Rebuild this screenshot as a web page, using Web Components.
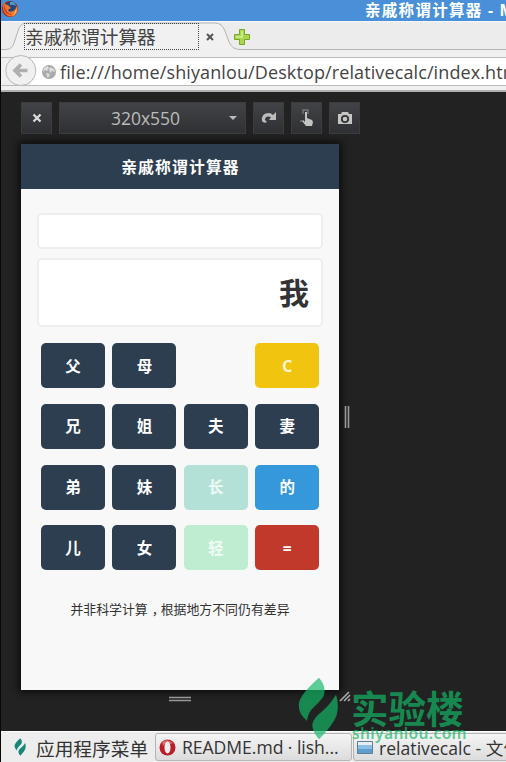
<!DOCTYPE html>
<html lang="zh-CN"><head><meta charset="utf-8"><title>亲戚称谓计算器</title>
<style>
html,body{margin:0;width:506px;height:762px;overflow:hidden;background:#222}
body{font-family:"Open Sans","Noto Sans CJK SC",sans-serif}
</style></head><body>
<desktop-screen></desktop-screen>
<script>
const define=(name,css,html)=>customElements.define(name,class extends HTMLElement{
  constructor(){super();this.attachShadow({mode:'open'}).innerHTML=`<style>*{box-sizing:border-box}svg{display:block;flex:none}${css}</style>${html}`;}
});

define('window-title',`:host{display:flex;box-sizing:border-box;height:21px;background:#4a90d9;color:#fff;align-items:center;overflow:hidden;white-space:nowrap;font:bold 15.5px/21px "Noto Sans","Noto Sans CJK SC",sans-serif;letter-spacing:1.3px}
svg{margin-right:346px}span{flex:none}`,
`<svg width="18" height="21" viewBox="0 0 18 21"><circle cx="9" cy="9" r="8" fill="#962b13"/><circle cx="10" cy="7" r="5.6" fill="#224779"/><path d="M9 2q5-1 6 4-3-2-6-1z" fill="#559bc8"/><path d="M3 2Q4 5 7 5L10 8Q8 9 7 10Q8 13 12 11Q16 10 15 5Q19 12 13 16Q7 18 3 12Q1 7 3 2z" fill="#ef762c"/><path d="M15 7q2 6-4 9 4-3 4-9z" fill="#ffdc69"/><path d="M3 4Q2 9 5 13 9 16 12 14 5 15 3 4z" fill="#cf3924"/></svg><span><slot></slot></span>`);

define('browser-tabs',`:host{display:flex;height:29px;background:#ececec;align-items:flex-start;position:relative;color:#444;border-top:1px solid #f7f7f7;box-sizing:border-box}
.edge{position:absolute;left:0;top:0}.tab{position:relative;margin:1px 0 0 23px;width:175px;height:27px;border:1px dotted #444;font-size:18.7px;line-height:26px;white-space:nowrap}
.x,.plus{position:relative}.x{margin:11px 0 0 7px}.plus{margin:6px 0 0 19px}`,
`<svg class="edge" width="506" height="28" viewBox="0 0 506 28"><path d="M0 27.5H5Q12 27.5 14 18L17 9Q19 1 26 1H214Q221 1 224 9L228 20Q231 27.5 239 27.5H506V29H0z" fill="#f1f1f1"/><path d="M0 27.5H5Q12 27.5 14 18L17 9Q19 1 26 1H214Q221 1 224 9L228 20Q231 27.5 239 27.5H506" fill="none" stroke="#b4b4b4"/></svg>
<div class="tab"><slot></slot></div><svg class="x" width="8" height="8"><path d="M1 1L7 7M7 1L1 7" stroke="#555" stroke-width="2"/></svg>
<svg class="plus" width="18" height="18"><path d="M6.5 1.5h5v5h5v5h-5v5h-5v-5h-5v-5h5z" fill="#a8d64c" stroke="#76a530"/><path d="M9 3v6H3" stroke="#c7e986" stroke-width="2" fill="none"/></svg>`);

define('address-bar',`:host{display:flex;height:42px;background:#f0f0f0;box-sizing:border-box;border-bottom:2px solid #aeb3b1;position:relative;align-items:flex-start}
.line{flex:none;width:506px;margin:7px 0 0;padding-left:41px;height:29px;border:solid #bbb;border-width:1px 0;background:linear-gradient(90deg,#f0f0f0 30px,#fff 30px);display:flex;align-items:center;white-space:nowrap;color:#444;font-size:18px;letter-spacing:.11px;overflow:hidden}
.url{margin-left:4px;margin-top:1px}.back{position:absolute;left:4px;top:5px}`,
`<div class="line"><svg class="globe" width="14" height="14"><circle cx="7" cy="7" r="7" fill="#aaa"/><path d="M2 3L5 1 7 3 5 6 3 5 1 7zM8 2L12 4 13 7 10 6 8 8 7 5zM4 8L8 9 7 12 5 12z" fill="#ddd"/></svg><span class="url"><slot></slot></span></div>
<svg class="back" width="32" height="31" viewBox="0 0 32 31"><circle cx="15.8" cy="15.5" r="15" fill="#f0f0f0" stroke="#b8b8b8"/><path d="M16 9.5L10 15.5 16 21.5M11 15.5H22.5" fill="none" stroke="#afafaf" stroke-width="3.6"/></svg>`);

define('tool-button',`:host{display:flex;box-sizing:border-box;width:31px;height:32px;flex:none;background:linear-gradient(#424347,#2f3033);border:1px solid #3c3c40;align-items:center;justify-content:center;color:#bbb}`,`<slot></slot>`);
define('device-toolbar',`:host{display:flex;gap:7px}.size{width:187px;position:relative;font-size:17.5px;line-height:32px;padding-right:14px}.arrow{position:absolute;right:8px;top:13px}`,
`<tool-button><svg width="10" height="10"><path d="M1.5 1.5L8.5 8.5M8.5 1.5L1.5 8.5" stroke="#ddd" stroke-width="2.2"/></svg></tool-button>
<tool-button class="size">320x550<svg class="arrow" width="8" height="5"><path d="M0 0H8L4 4z" fill="#bbb"/></svg></tool-button>
<tool-button><svg width="16" height="14"><path d="M1 10Q0 2 8 2 10 2 12 4L15 1V9H8L10 6Q4 4 4 9L6 11Q3 13 1 10z" fill="#bbb"/></svg></tool-button>
<tool-button><svg width="16" height="18"><path d="M6 3H8V9L13 11 14 13 13 17H7L3 12 4 11 6 13z" fill="#c3c3c3"/><path d="M4 5V1H9V5M1 12H3" fill="none" stroke="#777" stroke-width="1.4"/></svg></tool-button>
<tool-button><svg width="16" height="14"><path d="M1 3H4L5 1H11L12 3H15V13H1z" fill="#c5c5c5"/><circle cx="8" cy="8" r="3.2" fill="none" stroke="#333" stroke-width="1.8"/></svg></tool-button>`);

define('calc-key',`:host{display:flex;height:45px;border-radius:5px;background:var(--key,#2c3e50);color:var(--ink,#fff);font:bold 15.5px/22px "Noto Sans","Noto Sans CJK SC",sans-serif;align-items:center;justify-content:center}`,`<slot></slot>`);
define('relative-calculator',`:host{display:flex;flex-direction:column;width:318px;height:546px;background:#f8f8f8;box-shadow:0 0 7px 2px #0b0b0b;color:#333}
header{height:45px;background:#2c3e50;color:#fff;text-align:center;font-weight:bold;font-size:15.8px;line-height:46px;letter-spacing:1.15px;padding-left:1px}
.field{margin:0 16px;border:2px solid #eee;border-radius:5px;background:#fff}.in{height:36px;margin-top:24px}.out{height:69px;margin-top:9px;text-align:right;padding-right:12px;font-weight:bold;font-size:30px;line-height:65px}
.keys{margin:16px 20px 0;display:grid;grid-template-columns:repeat(4,64px);column-gap:7.4px;row-gap:15.8px}
p{margin:0;text-align:center;font-size:12.9px;line-height:20px;padding-top:29px}p span{position:relative;left:4px}`,
`<header>亲戚称谓计算器</header><div class="field in"></div><div class="field out">我</div>
<div class="keys"><calc-key>父</calc-key><calc-key>母</calc-key><span></span><calc-key style="--key:#f1c40f;--ink:#fff8d8">C</calc-key>
<calc-key>兄</calc-key><calc-key>姐</calc-key><calc-key>夫</calc-key><calc-key>妻</calc-key>
<calc-key>弟</calc-key><calc-key>妹</calc-key><calc-key style="--key:#b4e1d7;--ink:#effaf6">长</calc-key><calc-key style="--key:#3498db">的</calc-key>
<calc-key>儿</calc-key><calc-key>女</calc-key><calc-key style="--key:#beedd1;--ink:#effbf3">轻</calc-key><calc-key style="--key:#c0392b">=</calc-key></div>
<p>并非科学计算<span>，</span>根据地方不同仍有差异</p>`);

define('responsive-view',`:host{display:flex;flex-direction:column;height:639px;box-sizing:border-box;background:#222;padding:10px 0 0 21px;align-items:flex-start}
.row{display:flex;align-items:center;margin-top:10px;gap:5px}.b{margin:6px 0 0 148px}`,
`<device-toolbar></device-toolbar><div class="row"><relative-calculator></relative-calculator><svg width="7" height="22"><path d="M1.5 0V22M4.5 0V22" stroke="#999" stroke-width="1.6"/></svg></div>
<svg class="b" width="22" height="6"><path d="M0 1.5H22M0 4.5H22" stroke="#999" stroke-width="1.6"/></svg>`);

define('task-button',`:host{display:flex;box-sizing:border-box;align-items:center;height:28px;flex:none;border:1px solid #b5b5b5;border-radius:3px;background:linear-gradient(#f5f5f5,#dcdcdc);padding-left:3px;white-space:nowrap;overflow:hidden}`,`<slot></slot>`);
define('task-bar',`:host{display:flex;height:31px;box-sizing:border-box;background:#ededed;border-top:1px solid #fff;align-items:center;color:#333;font-size:17.6px;white-space:nowrap;overflow:hidden}
.menu{display:flex;width:154px;padding-left:13px;flex:none;align-items:center;font-size:18.7px}.menu span{margin-left:10px}.one{width:197px;margin-right:1px}.two{width:170px}.one span{margin-left:6px;letter-spacing:-.05px}.two span{margin-left:6px;letter-spacing:.02px}`,
`<div class="menu"><svg width="12" height="18" viewBox="12 15 120 190"><path d="M75 17Q101 47 87 76Q73 94 60 105Q42 120 39 147Q10 122 15 93Q20 65 75 17zM126 68Q136 96 128 130Q116 161 75 202Q54 177 55 157Q57 139 83 119Q107 99 126 68z" fill="#168878"/></svg><span>应用程序菜单</span></div>
<task-button class="one"><svg width="17" height="17"><ellipse cx="8.5" cy="8.5" rx="8" ry="8" fill="#b81f28"/><path d="M3 3Q8-1 14 4L11 5 8 3 4 7z" fill="#dc6b6c"/><ellipse cx="8.5" cy="8.5" rx="3" ry="6" fill="#f2eded"/></svg><span>README.md · lish...</span></task-button>
<task-button class="two"><svg width="16" height="14"><path d="M.5 1.5H15.5V13.5H.5z" fill="#5c9ed0" stroke="#617d94"/><path d="M1 2H15V5H1z" fill="#e7edf0"/><path d="M1 5H15V9H1z" fill="#8bc0e6"/></svg><span>relativecalc - 文件</span></task-button>`);

define('site-watermark',`:host{position:absolute;left:297px;top:674px;width:168px;height:72px;color:#13b967;opacity:.68}
.cn,.en,.leaf{position:absolute;white-space:nowrap}.leaf{left:0;top:3px}.cn{left:53px;top:9px;font:bold 37.5px/48px "Noto Sans CJK SC",sans-serif}.en{left:54px;top:49px;font:15.6px/20px "Noto Sans",sans-serif;letter-spacing:.35px;font-weight:600}`,
`<svg class="leaf" width="40" height="64" viewBox="12 15 120 192"><path d="M75 17Q101 47 87 76Q73 94 60 105Q42 120 39 147Q10 122 15 93Q20 65 75 17zM126 68Q136 96 128 130Q116 161 75 202Q54 177 55 157Q57 139 83 119Q107 99 126 68z" fill="currentColor"/></svg><span class="cn">实验楼</span><span class="en">shiyanlou.com</span>`);

define('desktop-screen',`:host{display:block;position:relative;box-sizing:border-box;width:506px;height:762px;border-left:1px solid #080808;overflow:hidden;background:#222}
.grip{position:absolute;left:338px;top:690px}`,
`<window-title>亲戚称谓计算器 - Mozilla Firefox</window-title><browser-tabs>亲戚称谓计算器</browser-tabs><address-bar>file:///home/shiyanlou/Desktop/relativecalc/index.html</address-bar><responsive-view style="padding-left:20px"></responsive-view><task-bar></task-bar>
<svg class="grip" width="13" height="13"><path d="M1 11L10 2M5 11L11 5M9 11L11 9" stroke="#aaa" stroke-width="1.6"/></svg><site-watermark></site-watermark>`);
</script></body></html>
